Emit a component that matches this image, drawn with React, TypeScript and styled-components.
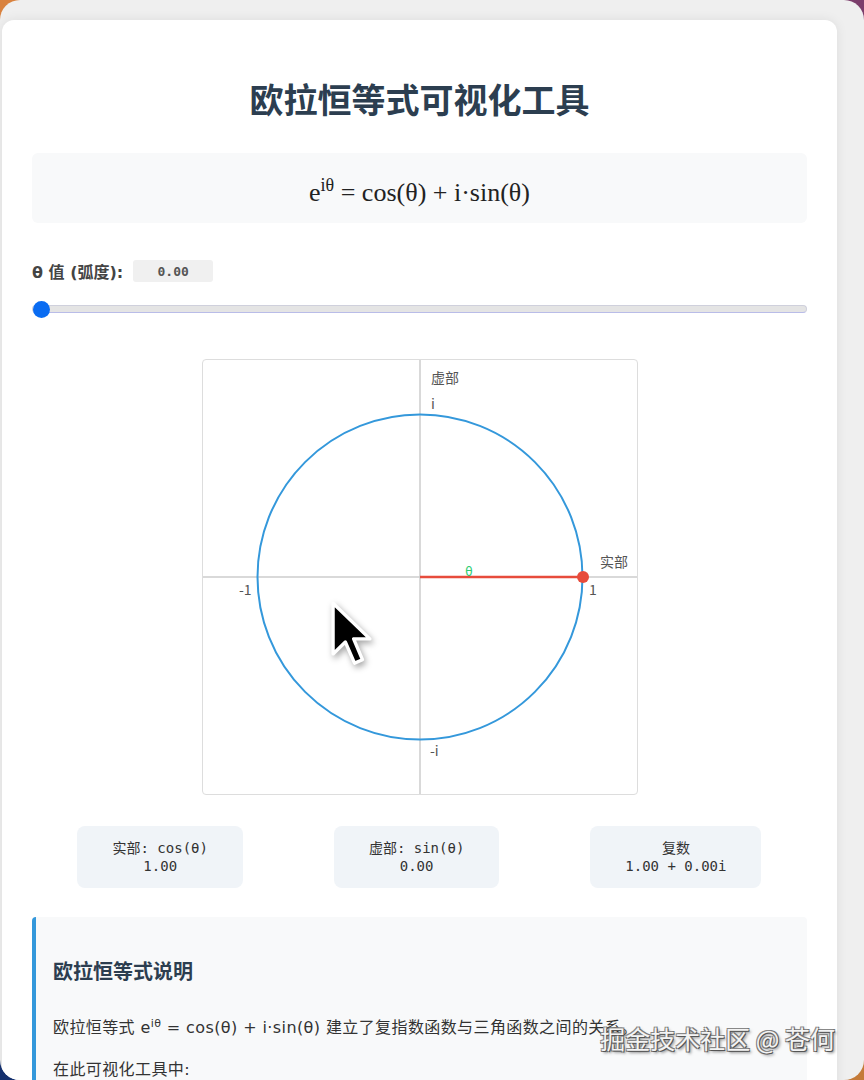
import styled, { createGlobalStyle } from 'styled-components';

const GlobalStyle = createGlobalStyle`
    html, body {
        margin: 0;
        padding: 0;
        height: 100%;
        overflow: hidden;
    }
    body {
        font-family: "Noto Sans", "Noto Sans CJK SC", sans-serif;
        color: #2c3e50;
    }
`;

const Wallpaper = styled.div`
    height: 1080px;
    background:
        linear-gradient(to right, #d9823f 50%, #7b3d6b 50%) top / 100% 50% no-repeat,
        linear-gradient(to right, #14306e 50%, #c47a38 50%) bottom / 100% 50% no-repeat;
`;

const Window = styled.div`
    position: relative;
    height: 1080px;
    border-radius: 20px;
    background: #efefef;
    overflow: hidden;
    padding-top: 20px;
    box-sizing: border-box;
`;

const Card = styled.main`
    margin: 0 27px 0 2px;
    background: #fff;
    border-radius: 12px;
    box-shadow: 0 0 12px rgba(0, 0, 0, 0.08);
    padding: 30px;
    min-height: 1200px;
`;

const Title = styled.h1`
    margin: 28px 0 34px;
    text-align: center;
    font-family: "Noto Sans CJK SC", sans-serif;
    font-size: 34px;
    line-height: 41px;
    font-weight: 700;
    color: #2c3e50;
`;

const FormulaBox = styled.div`
    height: 70px;
    padding-top: 10px;
    box-sizing: border-box;
    background: #f8f9fa;
    border-radius: 6px;
    display: flex;
    align-items: center;
    justify-content: center;
    font-family: "Liberation Serif", serif;
    font-size: 26px;
    color: #222;

    sup {
        font-size: 18px;
        line-height: 0;
        vertical-align: 10px;
    }
`;

const ControlRow = styled.div`
    margin-top: 36px;
    display: flex;
    align-items: center;
    gap: 10px;
`;

const ControlLabel = styled.label`
    font-family: "DejaVu Sans", "Noto Sans CJK SC", sans-serif;
    font-size: 16px;
    font-weight: 700;
    color: #444;
`;

const ValueBox = styled.span`
    width: 80px;
    height: 22px;
    display: flex;
    align-items: center;
    justify-content: center;
    background: #f0f0f0;
    border-radius: 3px;
    font-family: "DejaVu Sans Mono", monospace;
    font-size: 13px;
    font-weight: 700;
    color: #555;
`;

const Slider = styled.input`
    -webkit-appearance: none;
    appearance: none;
    display: block;
    width: 100%;
    margin: 18px 0 0;
    height: 16px;
    background: transparent;

    &::-webkit-slider-runnable-track {
        height: 8px;
        background: #e4e4e4;
        border: 1px solid #cfd0dc;
        border-bottom-color: #b9bce8;
        border-radius: 4px;
    }
    &::-webkit-slider-thumb {
        -webkit-appearance: none;
        width: 17px;
        height: 17px;
        margin-top: -5.5px;
        border-radius: 50%;
        background: #0a6cf2;
        border: none;
    }
`;

const CanvasWrap = styled.div`
    margin: 42px auto 0;
    width: 434px;
    height: 434px;
    border: 1px solid #ddd;
    border-radius: 4px;
`;

const InfoRow = styled.div`
    margin-top: 31px;
    display: flex;
    justify-content: space-around;
`;

const InfoBox = styled.div`
    padding: 13px 35px;
    background: #f0f4f8;
    border-radius: 8px;
    text-align: center;
    font-family: "DejaVu Sans Mono", "Noto Sans CJK SC", monospace;
    font-size: 14px;
    line-height: 18px;
    color: #333;
`;

const Explain = styled.section`
    margin-top: 29px;
    background: #f8f9fa;
    border-left: 4px solid #3498db;
    border-radius: 4px;
    padding: 42px 20px 20px 17px;
`;

const ExplainTitle = styled.h3`
    margin: 0 0 32px;
    font-family: "Noto Sans CJK SC", sans-serif;
    font-size: 20px;
    line-height: 24px;
    font-weight: 700;
    color: #2c3e50;
`;

const Para = styled.p`
    margin: 0 0 16px;
    font-family: "DejaVu Sans", "Noto Sans CJK SC", sans-serif;
    font-size: 16px;
    line-height: 26px;
    letter-spacing: 0.4px;
    color: #333;

    sup {
        font-size: 11px;
        line-height: 0;
    }
`;

const Watermark = styled.div`
    position: absolute;
    right: 29px;
    top: 1022px;
    font-family: "Noto Sans CJK SC", sans-serif;
    font-size: 25px;
    line-height: 32px;
    color: #f4f4f4;
    text-shadow: 1px 1px 0 #555, -1px -1px 0 #888, 1px -1px 0 #777, -1px 1px 0 #777, 2px 2px 3px rgba(0, 0, 0, 0.5);
`;

const Cursor = styled.svg`
    position: absolute;
    left: 330px;
    top: 600px;
    filter: drop-shadow(2px 3px 3px rgba(0, 0, 0, 0.35));
`;

const AxisLabel = styled.text`
    font-family: "Noto Sans CJK SC", "DejaVu Sans", sans-serif;
    font-size: 14px;
    fill: #555;
`;

const UnitCircle = () => (
    <svg width="434" height="434" viewBox="0 0 434 434">
        <line x1="0" y1="217" x2="434" y2="217" stroke="#ccc" strokeWidth="1.5" />
        <line x1="217" y1="0" x2="217" y2="434" stroke="#ccc" strokeWidth="1.5" />
        <circle cx="217" cy="217" r="162.5" fill="none" stroke="#3498db" strokeWidth="2" />
        <line x1="217" y1="217" x2="380" y2="217" stroke="#e74c3c" strokeWidth="2.5" />
        <circle cx="380" cy="217" r="6" fill="#e74c3c" />
        <text x="266" y="216" fontSize="12" fill="#2ecc71" textAnchor="middle" fontFamily="DejaVu Sans, sans-serif">θ</text>
        <AxisLabel x="228" y="23">虚部</AxisLabel>
        <AxisLabel x="228" y="49">i</AxisLabel>
        <AxisLabel x="397" y="207">实部</AxisLabel>
        <AxisLabel x="386" y="235">1</AxisLabel>
        <AxisLabel x="36" y="235">-1</AxisLabel>
        <AxisLabel x="227" y="396">-i</AxisLabel>
    </svg>
);

const App = () => {
    return (
        <Wallpaper>
            <GlobalStyle />
            <Window>
                <Card>
                    <Title>欧拉恒等式可视化工具</Title>
                    <FormulaBox>
                        <span>
                            e<sup>iθ</sup> = cos(θ) + i·sin(θ)
                        </span>
                    </FormulaBox>

                    <ControlRow>
                        <ControlLabel htmlFor="theta">θ 值 (弧度):</ControlLabel>
                        <ValueBox>0.00</ValueBox>
                    </ControlRow>
                    <Slider id="theta" type="range" min={0} max={6.28} step={0.01} defaultValue={0} />

                    <CanvasWrap>
                        <UnitCircle />
                    </CanvasWrap>

                    <InfoRow>
                        <InfoBox>
                            实部: cos(θ)
                            <br />
                            1.00
                        </InfoBox>
                        <InfoBox>
                            虚部: sin(θ)
                            <br />
                            0.00
                        </InfoBox>
                        <InfoBox>
                            复数
                            <br />
                            1.00 + 0.00i
                        </InfoBox>
                    </InfoRow>

                    <Explain>
                        <ExplainTitle>欧拉恒等式说明</ExplainTitle>
                        <Para>
                            欧拉恒等式 e<sup>iθ</sup> = cos(θ) + i·sin(θ) 建立了复指数函数与三角函数之间的关系。
                        </Para>
                        <Para>在此可视化工具中:</Para>
                    </Explain>
                </Card>

                <Cursor width="46" height="68" viewBox="0 0 15 22">
                    <path
                        d="M1 1 L1 17.5 L5 13.6 L8 20.5 L10.6 19.4 L7.7 12.6 L13 12.6 Z"
                        fill="#000"
                        stroke="#fff"
                        strokeWidth="1.1"
                        strokeLinejoin="round"
                    />
                </Cursor>
                <Watermark>掘金技术社区 @ 苍何</Watermark>
            </Window>
        </Wallpaper>
    );
};

export default App;
